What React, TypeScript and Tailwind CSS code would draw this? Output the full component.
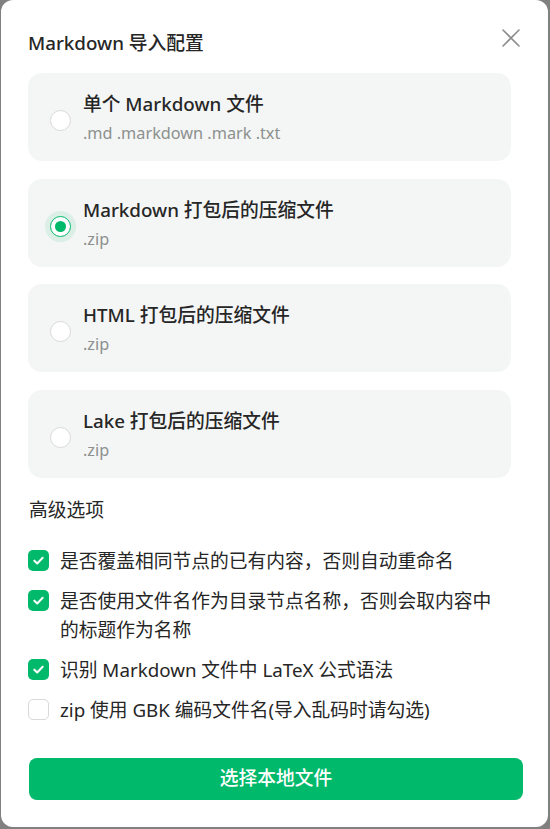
import { useState } from 'react';

const options = [
  { title: '单个 Markdown 文件', ext: '.md .markdown .mark .txt' },
  { title: 'Markdown 打包后的压缩文件', ext: '.zip' },
  { title: 'HTML 打包后的压缩文件', ext: '.zip' },
  { title: 'Lake 打包后的压缩文件', ext: '.zip' },
];

const advanced = [
  { label: '是否覆盖相同节点的已有内容，否则自动重命名', checked: true },
  { label: '是否使用文件名作为目录节点名称，否则会取内容中的标题作为名称', checked: true },
  { label: '识别 Markdown 文件中 LaTeX 公式语法', checked: true },
  { label: 'zip 使用 GBK 编码文件名(导入乱码时请勾选)', checked: false },
];

function Radio({ checked }: { checked: boolean }) {
  if (checked) {
    return (
      <span className="mt-[7px] flex h-[21px] w-[21px] shrink-0 items-center justify-center rounded-full border-[1.5px] border-[#00b96b] bg-white shadow-[0_0_0_5px_rgba(0,185,107,0.1)]">
        <span className="h-[11px] w-[11px] rounded-full bg-[#00b96b]" />
      </span>
    );
  }
  return <span className="mt-[7px] h-[21px] w-[21px] shrink-0 rounded-full border border-[#d9d9d9] bg-white" />;
}

function Checkbox({ checked }: { checked: boolean }) {
  if (!checked) {
    return <span className="mt-[4px] h-[21px] w-[21px] shrink-0 rounded-[5px] border border-[#d9d9d9] bg-white" />;
  }
  return (
    <span className="mt-[4px] flex h-[21px] w-[21px] shrink-0 items-center justify-center rounded-[5px] bg-[#00b96b]">
      <svg width="13" height="13" viewBox="0 0 14 14" fill="none">
        <path d="M2.5 7.2 L5.6 10.2 L11.5 4" stroke="white" strokeWidth="2.2" strokeLinecap="round" strokeLinejoin="round" />
      </svg>
    </span>
  );
}

export default function App() {
  const [selected, setSelected] = useState(1);

  return (
    <div
      className="h-[829px] w-[550px] overflow-hidden bg-[#808080]"
      style={{ fontFamily: '"Noto Sans", "Noto Sans CJK SC", sans-serif' }}
    >
      <div className="ml-px flex h-[827px] w-[547px] flex-col rounded-[12px] bg-white pl-[27px] pr-[28px] pt-[28px] text-[#262626]">
        {/* Header */}
        <div className="flex items-center justify-between">
          <h1 className="text-[18.75px] font-medium leading-[29px]">Markdown 导入配置</h1>
          <button className="-mt-[9px] flex h-[18px] w-[18px] items-center justify-center text-[#8c8c8c]">
            <svg width="18" height="18" viewBox="0 0 18 18" fill="none">
              <path d="M1 1 L17 17 M17 1 L1 17" stroke="currentColor" strokeWidth="1.6" strokeLinecap="round" />
            </svg>
          </button>
        </div>

        {/* Import type */}
        <div className="mt-[16px] flex w-[483px] flex-col gap-[17.5px]">
          {options.map((o, i) => (
            <div
              key={o.title}
              onClick={() => setSelected(i)}
              className="flex h-[88px] cursor-pointer items-center gap-[12px] rounded-[14px] bg-[#f4f5f5] pl-[22px]"
            >
              <Radio checked={selected === i} />
              <div className="flex flex-col">
                <span className="text-[18.75px] font-medium leading-[29px]">{o.title}</span>
                <span className="mt-[3px] text-[16.25px] leading-[24px] text-[#8c908e]">{o.ext}</span>
              </div>
            </div>
          ))}
        </div>

        {/* Advanced */}
        <h2 className="mt-[17px] pl-px text-[18.75px] leading-[29px]">高级选项</h2>
        <div className="mt-[22px] flex flex-col gap-[11px]">
          {advanced.map((a) => (
            <label key={a.label} className="flex items-start gap-[11px]">
              <Checkbox checked={a.checked} />
              <span className="max-w-[445px] text-[18.75px] leading-[29px] text-[#262626]">{a.label}</span>
            </label>
          ))}
        </div>

        <button className="mt-[34px] ml-px h-[42px] w-[494px] rounded-[8px] bg-[#00b96b] text-[18.75px] font-medium text-white">
          选择本地文件
        </button>
      </div>
    </div>
  );
}
